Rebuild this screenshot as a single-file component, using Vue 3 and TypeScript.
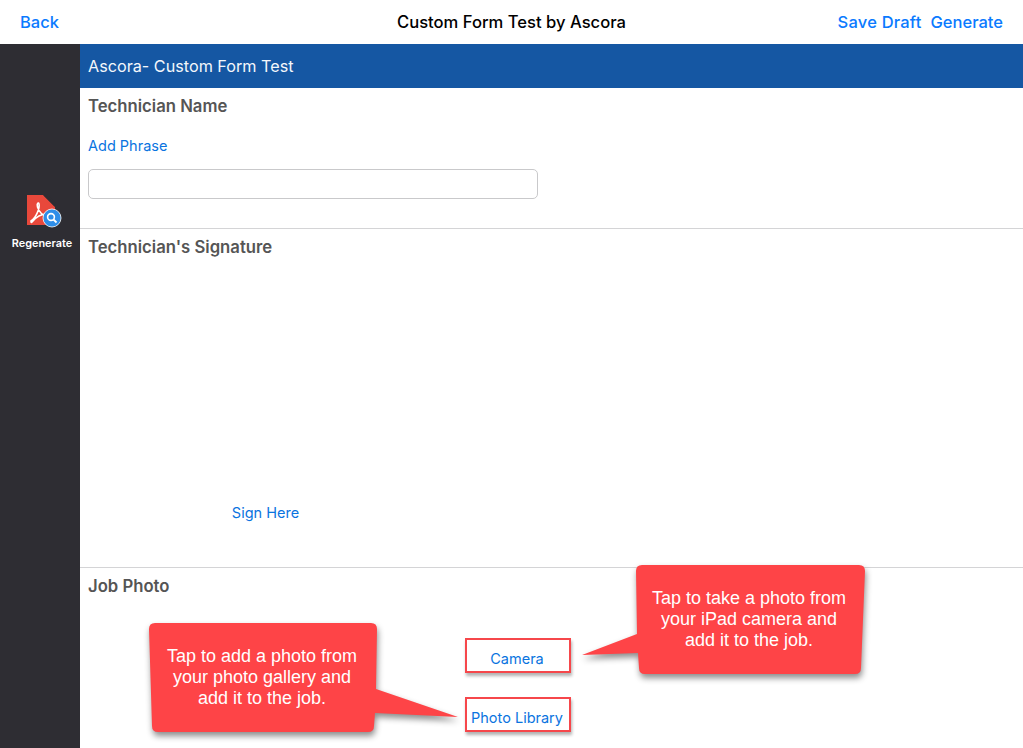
<script setup lang="ts">
interface Callout {
  id: string
  points: string
  lines: string[]
}

// 教程标注的气泡
const callouts: Callout[] = [
  {
    id: 'gallery',
    lines: ['Tap to add a photo from', 'your photo gallery and', 'add it to the job.'],
    points: 'M155 623 H371 Q377 623 377 629 L376 689 L458 717 L375 713 L374 726 Q374 732 368 732 H158 Q152 732 152 726 L149 629 Q149 623 155 623 Z'
  },
  {
    id: 'camera',
    lines: ['Tap to take a photo from', 'your iPad camera and', 'add it to the job.'],
    points: 'M642 565 H859 Q865 565 865 571 L861 668 Q861 674 855 674 H645 Q639 674 639 668 L638 653 L582 655 L637 634 L636 571 Q636 565 642 565 Z'
  }
]
</script>

<template>
  <div class="page">
    <header class="nav-bar">
      <a class="nav-link">Back</a>
      <h1 class="nav-title">Custom Form Test by Ascora</h1>
      <div class="nav-actions">
        <a class="nav-link save-draft">Save Draft</a>
        <a class="nav-link">Generate</a>
      </div>
    </header>

    <div class="body">
      <aside class="sidebar">
        <svg class="pdf-icon" width="36" height="36" viewBox="0 0 36 36">
          <path d="M1 1 H17 L29 13 V31 H1 Z" fill="#e8483b" />
          <path d="M18 1 L29 12 M21 1 L30 10" stroke="#2e2d33" stroke-width="1.2" fill="none" />
          <path d="M5 27 C10 24 14 14 13 10 C12.5 8 10.5 9 11.5 13 C13 18 17 22 22 22 C24 22 24 20 21 20 C16 20 10 23 6 28 C5 29 5 28 5 27 Z" fill="none" stroke="#fff" stroke-width="1.6" />
          <circle cx="26" cy="24" r="9" fill="#2f8ee8" stroke="#fff" stroke-width="0.8" />
          <circle cx="25" cy="23" r="3.4" fill="none" stroke="#fff" stroke-width="1.6" />
          <path d="M27.5 25.5 L30.5 28.5" stroke="#fff" stroke-width="1.8" />
        </svg>
        <span class="sidebar-label">Regenerate</span>
      </aside>

      <main class="form">
        <div class="form-header">Ascora- Custom Form Test</div>

        <section class="field field-name">
          <h2 class="field-label">Technician Name</h2>
          <a class="link add-phrase">Add Phrase</a>
          <input class="text-input" type="text" />
        </section>

        <section class="field field-signature">
          <h2 class="field-label">Technician's Signature</h2>
          <a class="link sign-here">Sign Here</a>
        </section>

        <section class="field field-photo">
          <h2 class="field-label">Job Photo</h2>
          <div class="photo-buttons">
            <a class="link photo-button">Camera</a>
            <a class="link photo-button">Photo Library</a>
          </div>
        </section>
      </main>
    </div>

    <svg class="callout-shapes" width="1023" height="748" viewBox="0 0 1023 748">
      <path v-for="c in callouts" :key="c.id" :d="c.points" class="callout-shape" />
    </svg>
    <div v-for="c in callouts" :key="c.id" class="callout-text" :class="`callout-${c.id}`">
      <div v-for="line in c.lines" :key="line">{{ line }}</div>
    </div>
  </div>
</template>

<style>
html,
body {
  margin: 0;
  background: #fff;
}
</style>

<style scoped>
.page {
  position: relative;
  width: 1023px;
  height: 748px;
  overflow: hidden;
  font-family: Inter, "Liberation Sans", sans-serif;
  background: #fff;
}

.nav-bar {
  display: flex;
  align-items: center;
  justify-content: space-between;
  height: 44px;
  padding: 0 20px;
  box-sizing: border-box;
}

.nav-link {
  font-size: 16.5px;
  font-weight: 500;
  color: #0a7aff;
}

.save-draft {
  letter-spacing: 0.2px;
}

.nav-title {
  position: absolute;
  left: 0;
  width: 1023px;
  margin: 0;
  text-align: center;
  font-size: 16.6px;
  font-weight: 500;
  color: #000;
  pointer-events: none;
}

.nav-actions {
  display: flex;
  gap: 9px;
}

.body {
  display: flex;
  height: 704px;
}

.sidebar {
  display: flex;
  flex-direction: column;
  align-items: center;
  flex: 0 0 80px;
  padding-top: 150px;
  box-sizing: border-box;
  background: #2e2d33;
}

.pdf-icon {
  margin-left: 8px;
}

.sidebar-label {
  margin: 6px 0 0 4px;
  font-size: 10.9px;
  font-weight: 600;
  color: #fff;
}

.form {
  flex: 1;
  min-width: 0;
}

.form-header {
  height: 44px;
  padding-left: 8px;
  line-height: 44px;
  font-size: 16.2px;
  color: #f4f7fb;
  background: #1557a3;
}

.field {
  padding: 9px 8px 0;
  box-sizing: border-box;
  border-bottom: 1px solid #d4d4d6;
}

.field-label {
  margin: 0;
  font-size: 16.7px;
  line-height: 19px;
  font-weight: 600;
  color: #555;
}

.field-name {
  height: 141px;
}

.field-signature {
  height: 339px;
}

.field-photo {
  border-bottom: 0;
}

.link {
  font-size: 14.5px;
  color: #0a74e0;
}

.add-phrase {
  display: block;
  margin-top: 21px;
  line-height: 17px;
}

.text-input {
  display: block;
  width: 450px;
  height: 30px;
  margin-top: 15px;
  padding: 0;
  box-sizing: border-box;
  border: 1px solid #c9c9cb;
  border-radius: 5px;
  background: #fff;
}

.sign-here {
  display: block;
  width: 355px;
  margin-top: 247px;
  text-align: center;
  line-height: 17px;
}

.photo-buttons {
  display: flex;
  flex-direction: column;
  gap: 24px;
  width: 106px;
  margin: 42px 0 0 377px;
}

.photo-button {
  display: flex;
  align-items: center;
  justify-content: center;
  height: 35px;
  padding: 5px 2px 0 0;
  box-sizing: border-box;
  border: 2px solid #f6474b;
  background: #fff;
  box-shadow: 1px 3px 3px rgba(0, 0, 0, 0.3);
  white-space: nowrap;
}

.callout-shapes {
  position: absolute;
  left: 0;
  top: 0;
  pointer-events: none;
}

.callout-shape {
  fill: #fe4447;
  filter: drop-shadow(1px 4px 3px rgba(0, 0, 0, 0.45));
}

.callout-text {
  position: absolute;
  width: 228px;
  font-family: "Liberation Sans", Arial, sans-serif;
  font-size: 18px;
  line-height: 21px;
  text-align: center;
  color: #fff;
}

.callout-gallery {
  left: 148px;
  top: 646px;
}

.callout-camera {
  left: 635px;
  top: 588px;
}
</style>
